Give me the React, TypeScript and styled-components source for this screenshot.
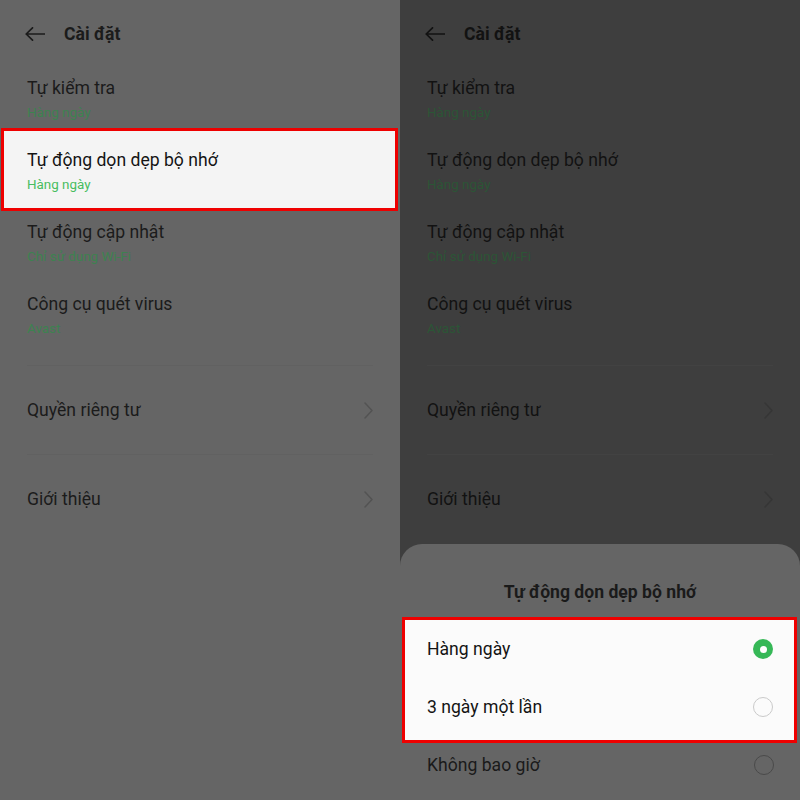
import styled, { createGlobalStyle } from 'styled-components'

type Tone = 'mid' | 'dark'

const palette = {
  mid: { bg: '#656565', text: '#1b1b1b', sub: '#3d8250', line: '#616161', chevron: '#535353' },
  dark: { bg: '#3e3e3e', text: '#121212', sub: '#2c5536', line: '#424242', chevron: '#363636' },
}

const GlobalStyle = createGlobalStyle`
  html, body {
    margin: 0;
    padding: 0;
    background: #3e3e3e;
  }
  body {
    font-family: Roboto, "Noto Sans", "Liberation Sans", sans-serif;
    -webkit-font-smoothing: antialiased;
  }
`

const Page = styled.div`
  display: grid;
  grid-template-columns: 400px 400px;
  width: 800px;
  height: 800px;
  overflow: hidden;
`

const Screen = styled.div<{ $tone: Tone }>`
  position: relative;
  display: flex;
  flex-direction: column;
  height: 800px;
  background: ${(p) => palette[p.$tone].bg};
  color: ${(p) => palette[p.$tone].text};
  overflow: hidden;
`

const Header = styled.header`
  display: flex;
  align-items: center;
  height: 65px;
  padding: 3px 0 0 25px;
  gap: 19px;
  box-sizing: border-box;
`

const HeaderTitle = styled.h1`
  margin: 0;
  font-size: 17.6px;
  font-weight: 700;
  line-height: 22px;
`

const Group = styled.div`
  display: flex;
  flex-direction: column;
  margin-bottom: 12px;
`

const Row = styled.div<{ $highlight?: boolean }>`
  display: flex;
  flex-direction: column;
  box-sizing: border-box;
  height: ${(p) => (p.$highlight ? '83px' : '72px')};
  padding: ${(p) => (p.$highlight ? '18px 0 0 23px' : '12px 0 0 27px')};
  margin: ${(p) => (p.$highlight ? '-9px 2px -2px 1px' : '0')};
  border: ${(p) => (p.$highlight ? '3px solid #ee0000' : 'none')};
  background: ${(p) => (p.$highlight ? '#f4f4f4' : 'transparent')};
  color: ${(p) => (p.$highlight ? '#141414' : 'inherit')};
`

const RowTitle = styled.div`
  font-size: 17.6px;
  line-height: 22px;
`

const RowSub = styled.div<{ $tone: Tone; $highlight?: boolean }>`
  margin-top: 6px;
  font-size: 13.4px;
  line-height: 16px;
  color: ${(p) => (p.$highlight ? '#48bd60' : palette[p.$tone].sub)};
`

const LinkRow = styled.div<{ $tone: Tone }>`
  display: flex;
  align-items: center;
  justify-content: space-between;
  height: 89px;
  margin: 0 27px;
  border-top: 1px solid ${(p) => palette[p.$tone].line};
  box-sizing: border-box;
  font-size: 17.6px;
`

const Sheet = styled.div`
  position: absolute;
  left: 0;
  right: 0;
  top: 544px;
  bottom: 0;
  display: flex;
  flex-direction: column;
  background: #656565;
  border-radius: 22px 22px 0 0;
  color: #1a1a1a;
`

const SheetTitle = styled.div`
  padding-top: 36px;
  height: 73px;
  box-sizing: border-box;
  text-align: center;
  font-size: 17.6px;
  font-weight: 700;
  line-height: 24px;
`

const OptionRow = styled.div`
  display: flex;
  align-items: center;
  justify-content: space-between;
  height: 58px;
  padding: 0 26px 0 27px;
  font-size: 17.6px;
`

const OptionGroup = styled.div`
  margin: 0 3px -7px 2px;
  padding-bottom: 4px;
  border: 3px solid #ee0000;
  background: #fbfbfb;
  color: #141414;

  & > ${OptionRow} {
    padding: 0 21px 0 22px;
  }
`

const Radio = styled.span<{ $checked?: boolean; $onLight?: boolean }>`
  position: relative;
  width: 20px;
  height: 20px;
  border-radius: 50%;
  box-sizing: border-box;
  background: ${(p) => (p.$checked ? '#36b857' : 'transparent')};
  border: ${(p) => (p.$checked ? 'none' : `1.5px solid ${p.$onLight ? '#cacaca' : '#4a4a4a'}`)};

  &::after {
    content: '';
    display: ${(p) => (p.$checked ? 'block' : 'none')};
    position: absolute;
    left: 6.5px;
    top: 6.5px;
    width: 7px;
    height: 7px;
    border-radius: 50%;
    background: #ffffff;
  }
`

const BackArrow = ({ color }: { color: string }) => (
  <svg width="20" height="14" viewBox="0 0 20 14" fill="none">
    <path d="M1.2 7H19.5M7.5 0.8L1.2 7l6.3 6.2" stroke={color} strokeWidth="1.7" strokeLinecap="round" strokeLinejoin="round" />
  </svg>
)

const Chevron = ({ color }: { color: string }) => (
  <svg width="9" height="17" viewBox="0 0 9 17" fill="none">
    <path d="M1 1l7 7.5L1 16" stroke={color} strokeWidth="1.5" strokeLinecap="round" strokeLinejoin="round" />
  </svg>
)

const items = [
  { title: 'Tự kiểm tra', sub: 'Hàng ngày' },
  { title: 'Tự động dọn dẹp bộ nhớ', sub: 'Hàng ngày' },
  { title: 'Tự động cập nhật', sub: 'Chỉ sử dụng Wi-Fi' },
  { title: 'Công cụ quét virus', sub: 'Avast' },
]

const links = ['Quyền riêng tư', 'Giới thiệu']

type SettingsProps = {
  tone: Tone
  highlightIndex?: number
  children?: React.ReactNode
}

const Settings = ({ tone, highlightIndex, children }: SettingsProps) => (
  <Screen $tone={tone}>
    <Header>
      <BackArrow color={palette[tone].text} />
      <HeaderTitle>Cài đặt</HeaderTitle>
    </Header>
    <Group>
      {items.map((item, i) => (
        <Row key={item.title} $highlight={i === highlightIndex}>
          <RowTitle>{item.title}</RowTitle>
          <RowSub $tone={tone} $highlight={i === highlightIndex}>
            {item.sub}
          </RowSub>
        </Row>
      ))}
    </Group>
    {links.map((label) => (
      <LinkRow key={label} $tone={tone}>
        <span>{label}</span>
        <Chevron color={palette[tone].chevron} />
      </LinkRow>
    ))}
    {children}
  </Screen>
)

const App = () => {
  return (
    <>
      <GlobalStyle />
      <Page>
        <Settings tone="mid" highlightIndex={1} />
        <Settings tone="dark">
          <Sheet>
            <SheetTitle>Tự động dọn dẹp bộ nhớ</SheetTitle>
            <OptionGroup>
              <OptionRow>
                <span>Hàng ngày</span>
                <Radio $checked />
              </OptionRow>
              <OptionRow>
                <span>3 ngày một lần</span>
                <Radio $onLight />
              </OptionRow>
            </OptionGroup>
            <OptionRow>
              <span>Không bao giờ</span>
              <Radio />
            </OptionRow>
          </Sheet>
        </Settings>
      </Page>
    </>
  )
}

export default App
